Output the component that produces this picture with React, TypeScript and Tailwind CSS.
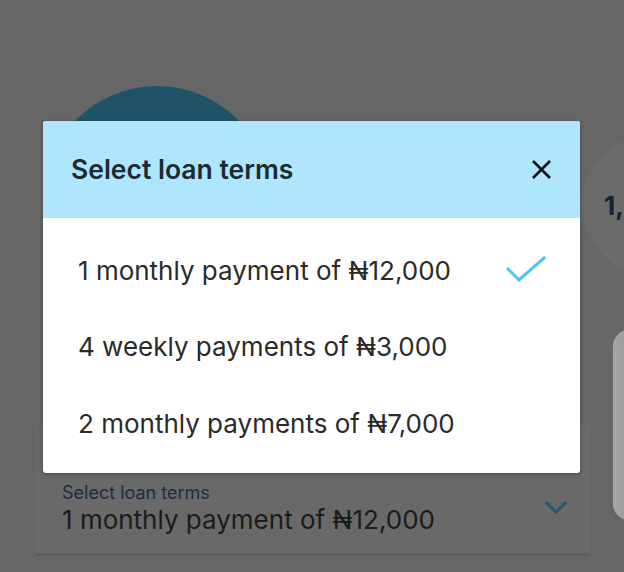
import React from "react";

const font = { fontFamily: "Inter, 'Noto Sans', 'DejaVu Sans', sans-serif" };

function Check() {
  return (
    <svg width="40" height="28" viewBox="0 0 40 28" fill="none">
      <path d="M2 13 L13 24 L38 2" stroke="#4cc4f6" strokeWidth="3" strokeLinecap="square" />
    </svg>
  );
}

function CloseX() {
  return (
    <svg width="21" height="21" viewBox="0 0 21 21" fill="none">
      <path d="M2 2 L19 19 M19 2 L2 19" stroke="#111" strokeWidth="2.6" />
    </svg>
  );
}

export default function App() {
  const options = [
    "1 monthly payment of ₦12,000",
    "4 weekly payments of ₦3,000",
    "2 monthly payments of ₦7,000",
  ];
  return (
    <div className="relative w-[624px] h-[572px] overflow-hidden bg-[#666666]" style={font}>
      {/* background page (dimmed) */}
      <div className="flex flex-col h-full">
        <div className="relative h-[425px]">
          <div className="absolute left-[43px] top-[86px] w-[228px] h-[228px] rounded-full bg-[#1f5468]" />
          <div className="absolute left-[582px] top-[135px] w-[140px] h-[140px] rounded-full bg-[#6b6b6b] flex items-center pl-[22px]">
            <span className="text-[26px] font-bold text-[#14213a]">1,</span>
          </div>
          <div className="absolute left-[613px] top-[330px] w-[60px] h-[190px] rounded-[16px] bg-gradient-to-r from-[#a6a6a6] to-[#7c7c7c]" />
        </div>
        <div className="mx-[35px] w-[555px] h-[131px] bg-[#696969] border-b-[3px] border-[#5e5e5e] flex items-center justify-between pl-[27px] pr-[22px] pt-[40px]">
          <div className="flex flex-col">
            <span className="text-[18px] leading-[22px] text-[#1d2c45]">Select loan terms</span>
            <span className="text-[26px] leading-[32px] text-[#1b1b1b]">1 monthly payment of ₦12,000</span>
          </div>
          <svg width="24" height="14" viewBox="0 0 24 14" fill="none" className="mb-[4px]">
            <path d="M2 2 L12 12 L22 2" stroke="#1f5b72" strokeWidth="3" />
          </svg>
        </div>
      </div>

      {/* modal */}
      <div className="absolute left-[43px] top-[121px] w-[537px] h-[352px] bg-white rounded-[3px] overflow-hidden shadow-[0_1px_4px_rgba(0,0,0,0.3)] flex flex-col">
        <div className="h-[97px] bg-[#ade6fd] flex items-center justify-between pl-[28px] pr-[28px]">
          <span className="text-[26.5px] font-semibold text-[#1f2a30]">Select loan terms</span>
          <CloseX />
        </div>
        <div className="flex flex-col pt-[14px]">
          {options.map((o, i) => (
            <div key={i} className="h-[76.5px] flex items-center justify-between pl-[35px] pr-[34px]">
              <span className="text-[26px] text-[#2a2a2a]">{o}</span>
              {i === 0 && <Check />}
            </div>
          ))}
        </div>
      </div>
    </div>
  );
}
